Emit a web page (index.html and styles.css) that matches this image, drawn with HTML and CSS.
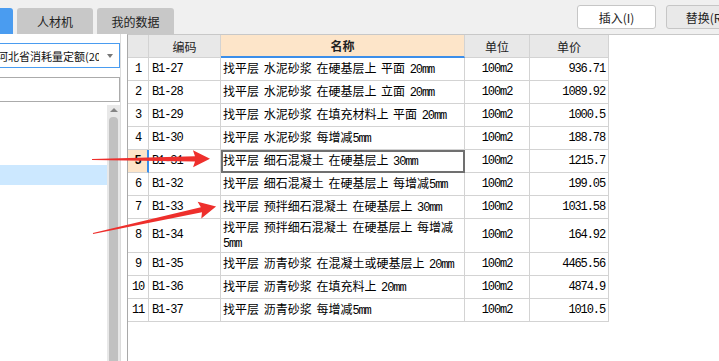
FILE: index.html
```html
<!DOCTYPE html>
<html lang="zh-CN">
<head>
<meta charset="utf-8">
<title>定额</title>
<link rel="stylesheet" href="styles.css">
</head>
<body>
<div class="app">
  <header class="topbar">
    <nav class="tabs">
      <div class="tab tab-active"></div>
      <div class="tab">人材机</div>
      <div class="tab">我的数据</div>
    </nav>
    <div class="actions">
      <button class="btn">插入(I)</button>
      <button class="btn btn-alt">替换(R)</button>
    </div>
  </header>
  <main class="main">
    <aside class="side">
      <div class="select"><span class="select-text">河北省消耗量定额(2012)</span><span class="caret"></span></div>
      <div class="search"></div>
      <div class="tree">
        <ul class="tree-list"><li></li><li></li><li></li><li class="sel"></li></ul>
        <div class="vscroll"><span class="up"></span><span class="thumb"></span></div>
      </div>
    </aside>
    <section class="pane">
      <table class="grid">
        <thead>
          <tr>
            <th class="c-rn"></th>
            <th class="c-code">编码</th>
            <th class="c-name">名称</th>
            <th class="c-unit">单位</th>
            <th class="c-price">单价</th>
          </tr>
        </thead>
        <tbody>
          <tr><td class="rn">1</td><td class="code">B1-27</td><td class="name">找平层 水泥砂浆 在硬基层上 平面 <span class="m">20mm</span></td><td class="unit">100m2</td><td class="price">936.71</td></tr>
          <tr><td class="rn">2</td><td class="code">B1-28</td><td class="name">找平层 水泥砂浆 在硬基层上 立面 <span class="m">20mm</span></td><td class="unit">100m2</td><td class="price">1089.92</td></tr>
          <tr><td class="rn">3</td><td class="code">B1-29</td><td class="name">找平层 水泥砂浆 在填充材料上 平面 <span class="m">20mm</span></td><td class="unit">100m2</td><td class="price">1000.5</td></tr>
          <tr><td class="rn">4</td><td class="code">B1-30</td><td class="name">找平层 水泥砂浆 每增减<span class="m">5mm</span></td><td class="unit">100m2</td><td class="price">188.78</td></tr>
          <tr><td class="rn rn-cur">5</td><td class="code">B1-31</td><td class="name focus">找平层 细石混凝土 在硬基层上 <span class="m">30mm</span></td><td class="unit">100m2</td><td class="price">1215.7</td></tr>
          <tr><td class="rn">6</td><td class="code">B1-32</td><td class="name">找平层 细石混凝土 在硬基层上 每增减<span class="m">5mm</span></td><td class="unit">100m2</td><td class="price">199.05</td></tr>
          <tr><td class="rn">7</td><td class="code">B1-33</td><td class="name">找平层 预拌细石混凝土 在硬基层上 <span class="m">30mm</span></td><td class="unit">100m2</td><td class="price">1031.58</td></tr>
          <tr class="tall"><td class="rn">8</td><td class="code">B1-34</td><td class="name">找平层 预拌细石混凝土 在硬基层上 每增减<br><span class="m">5mm</span></td><td class="unit">100m2</td><td class="price">164.92</td></tr>
          <tr><td class="rn">9</td><td class="code">B1-35</td><td class="name">找平层 沥青砂浆 在混凝土或硬基层上 <span class="m">20mm</span></td><td class="unit">100m2</td><td class="price">4465.56</td></tr>
          <tr><td class="rn">10</td><td class="code">B1-36</td><td class="name">找平层 沥青砂浆 在填充料上 <span class="m">20mm</span></td><td class="unit">100m2</td><td class="price">4874.9</td></tr>
          <tr><td class="rn">11</td><td class="code">B1-37</td><td class="name">找平层 沥青砂浆 每增减<span class="m">5mm</span></td><td class="unit">100m2</td><td class="price">1010.5</td></tr>
        </tbody>
      </table>
    </section>
  </main>
  <svg class="annot" width="719" height="361" viewBox="0 0 719 361" aria-hidden="true">
    <polygon class="arrow" transform="translate(92 159.5) rotate(-0.4)" points="0,-0.6 103,-2.6 101,-8.5 118,0 101,8.5 103,2.6 0,0.6"/>
    <polygon class="arrow" transform="translate(93 233.5) rotate(-12.4)" points="0,-0.6 111,-2.6 109,-8.5 126,0 109,8.5 111,2.6 0,0.6"/>
  </svg>
</div>
</body>
</html>
```
FILE: styles.css
```css
* { box-sizing: border-box; }
html, body { margin: 0; padding: 0; }
body {
  width: 719px;
  height: 361px;
  overflow: hidden;
  background: #fff;
  font-family: "Noto Sans CJK SC", "Noto Sans", sans-serif;
  font-size: 12px;
  color: #000;
}
.app {
  position: relative;
  width: 719px;
  height: 361px;
  overflow: hidden;
  display: flex;
  flex-direction: column;
}

/* top bar */
.topbar {
  height: 34px;
  flex: none;
  background: #f0f0f0;
  display: flex;
  justify-content: space-between;
}
.tabs {
  display: flex;
  align-items: flex-end;
  gap: 4px;
}
.tab {
  height: 26px;
  width: 76px;
  background: #c8c8c8;
  border-radius: 3px 3px 0 0;
  display: flex;
  align-items: center;
  justify-content: center;
  font-size: 12px;
  color: #222;
}
.tab:last-child { width: 77px; }
.tab-active {
  width: 13px;
  background: #4a9cf0;
  border-radius: 0 3px 0 0;
}
.actions {
  display: flex;
  align-items: flex-start;
  gap: 10px;
  padding-top: 5px;
  margin-right: -26px;
}
.btn {
  width: 79px;
  height: 24px;
  padding: 0;
  border: 1px solid #c6c6c6;
  border-radius: 3px;
  background: #fff;
  font-family: "Noto Sans CJK SC", "Noto Sans", sans-serif;
  font-size: 12px;
  color: #222;
}
.btn-alt { background: #e9e9e9; }

/* main */
.main {
  flex: 1;
  display: flex;
  min-height: 0;
}
.side {
  width: 121px;
  flex: none;
  overflow: hidden;
  padding-top: 9px;
  display: flex;
  flex-direction: column;
  border-right: 1px solid #dcdcdc;
}
.select {
  height: 25px;
  width: 150px;
  margin-left: -30px;
  flex: none;
  border: 1px solid #4a9cf0;
  background: #fff;
  display: flex;
  align-items: center;
  padding-left: 26px;
}
.select-text {
  flex: 1;
  min-width: 0;
  overflow: hidden;
  white-space: nowrap;
  font-size: 11px;
  color: #111;
}
.caret {
  width: 0;
  height: 0;
  border-left: 3px solid transparent;
  border-right: 3px solid transparent;
  border-top: 4px solid #777;
  margin: 0 6px 0 8px;
}
.search {
  height: 25px;
  width: 150px;
  margin-left: -30px;
  margin-top: 9px;
  flex: none;
  border: 1px solid #ababab;
  background: #fff;
}
.tree {
  flex: 1;
  display: flex;
  margin-top: 3px;
  min-height: 0;
}
.tree-list {
  width: 107px;
  list-style: none;
  margin: 0;
  padding: 0;
}
.tree-list li { height: 20px; }
.tree-list li.sel { background: #cce8ff; }
.vscroll {
  width: 13px;
  background: #e8e8e8;
  display: flex;
  flex-direction: column;
  align-items: center;
}
.up {
  width: 0;
  height: 0;
  margin-top: 3px;
  border-left: 4px solid transparent;
  border-right: 4px solid transparent;
  border-bottom: 4px solid #858585;
}
.thumb {
  flex: 1;
  width: 9px;
  margin-top: 5px;
  background: #c1c1c1;
  border-radius: 4px 4px 0 0;
}

/* grid pane */
.pane {
  flex: 1;
  margin-left: 6px;
  border-left: 1px solid #a9a9a9;
  border-top: 1px solid #c8c8c8;
  background: #fff;
}
.grid {
  border-collapse: separate;
  border-spacing: 0;
  table-layout: fixed;
  width: 481px;
}
.grid th, .grid td {
  box-sizing: border-box;
  height: 23px;
  padding: 0 3px;
  border-right: 1px solid #d3d3d3;
  border-bottom: 1px solid #d3d3d3;
  line-height: 15px;
  vertical-align: middle;
  white-space: nowrap;
}
.grid th {
  background: #e8e8e8;
  font-weight: normal;
  font-size: 12px;
  color: #222;
  text-align: center;
}
.grid th.c-rn { width: 21px; }
.grid th.c-code { width: 72px; }
.grid th.c-name {
  width: 244px;
  background: #fde5c9;
  font-weight: bold;
  border-bottom: 2px solid #3b8eea;
}
.grid th.c-unit { width: 65px; }
.grid th.c-price { width: 79px; }

.grid .tall td { height: 34px; }
.grid td.name { padding-left: 2px; white-space: normal; word-spacing: 2px; }

.rn, .code, .unit, .price, .m {
  font-family: "Liberation Mono", "DejaVu Sans Mono", monospace;
  font-size: 12px;
  letter-spacing: -1.1px;
}
.m { word-spacing: 0; }
.rn { text-align: center; padding: 0; }
.rn-cur {
  background: #fde5c9;
  font-weight: bold;
  border-right: 2px solid #3b8eea !important;
}
.unit { text-align: center; }
.price { text-align: right; }
.focus {
  outline: 2px solid #707070;
  outline-offset: -2px;
}

/* annotation arrows */
.annot {
  position: absolute;
  left: 0;
  top: 0;
  pointer-events: none;
}
.arrow { fill: #ee2f2c; }
```
